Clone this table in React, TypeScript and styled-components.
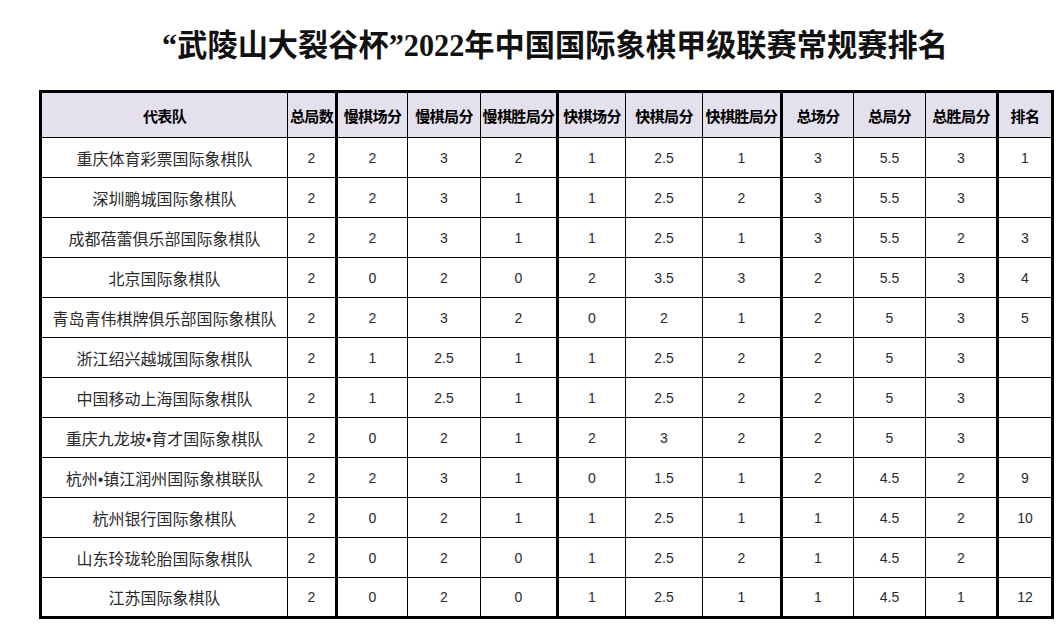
import styled, { createGlobalStyle } from 'styled-components';

const GlobalStyle = createGlobalStyle`
  html, body {
    margin: 0;
    padding: 0;
    background: #fff;
  }
`;

type Row = (string | number)[];

const columns = [
  { label: '代表队', width: 247 },
  { label: '总局数', width: 49 },
  { label: '慢棋场分', width: 71, thick: true },
  { label: '慢棋局分', width: 73 },
  { label: '慢棋胜局分', width: 77 },
  { label: '快棋场分', width: 68, thick: true },
  { label: '快棋局分', width: 77 },
  { label: '快棋胜局分', width: 79 },
  { label: '总场分', width: 72, thick: true },
  { label: '总局分', width: 72 },
  { label: '总胜局分', width: 72 },
  { label: '排名', width: 55, thick: true },
];

const rows: Row[] = [
  ['重庆体育彩票国际象棋队', 2, 2, 3, 2, 1, 2.5, 1, 3, 5.5, 3, 1],
  ['深圳鹏城国际象棋队', 2, 2, 3, 1, 1, 2.5, 2, 3, 5.5, 3, ''],
  ['成都蓓蕾俱乐部国际象棋队', 2, 2, 3, 1, 1, 2.5, 1, 3, 5.5, 2, 3],
  ['北京国际象棋队', 2, 0, 2, 0, 2, 3.5, 3, 2, 5.5, 3, 4],
  ['青岛青伟棋牌俱乐部国际象棋队', 2, 2, 3, 2, 0, 2, 1, 2, 5, 3, 5],
  ['浙江绍兴越城国际象棋队', 2, 1, 2.5, 1, 1, 2.5, 2, 2, 5, 3, ''],
  ['中国移动上海国际象棋队', 2, 1, 2.5, 1, 1, 2.5, 2, 2, 5, 3, ''],
  ['重庆九龙坡•育才国际象棋队', 2, 0, 2, 1, 2, 3, 2, 2, 5, 3, ''],
  ['杭州•镇江润州国际象棋联队', 2, 2, 3, 1, 0, 1.5, 1, 2, 4.5, 2, 9],
  ['杭州银行国际象棋队', 2, 0, 2, 1, 1, 2.5, 1, 1, 4.5, 2, 10],
  ['山东玲珑轮胎国际象棋队', 2, 0, 2, 0, 1, 2.5, 2, 1, 4.5, 2, ''],
  ['江苏国际象棋队', 2, 0, 2, 0, 1, 2.5, 1, 1, 4.5, 1, 12],
];

const App = () => {
  return (
    <Page>
      <GlobalStyle />
      <TitleBar>
        <Title>“武陵山大裂谷杯”2022年中国国际象棋甲级联赛常规赛排名</Title>
      </TitleBar>

      <Table>
        <colgroup>
          {columns.map((c) => (
            <col key={c.label} style={{ width: c.width }} />
          ))}
        </colgroup>
        <thead>
          <tr>
            {columns.map((c) => (
              <HeadCell key={c.label} $thick={c.thick}>
                {c.label}
              </HeadCell>
            ))}
          </tr>
        </thead>
        <tbody>
          {rows.map((row) => (
            <BodyRow key={row[0]}>
              {row.map((value, i) =>
                i === 0 ? (
                  <TeamCell key={i}>{value}</TeamCell>
                ) : (
                  <NumCell key={i} $thick={columns[i].thick}>
                    {value}
                  </NumCell>
                )
              )}
            </BodyRow>
          ))}
        </tbody>
      </Table>
    </Page>
  );
};

const Page = styled.div`
  width: 1058px;
  height: 626px;
  overflow: hidden;
  padding: 0 0 0 39px;
  box-sizing: border-box;
`;

const TitleBar = styled.div`
  width: 1016px;
  height: 90px;
  display: flex;
  justify-content: center;
  padding: 26px 0 0 16px;
  box-sizing: border-box;
`;

const Title = styled.h1`
  margin: 0;
  display: inline-block;
  font-family: 'Liberation Serif', 'Noto Sans CJK SC', serif;
  font-size: 31px;
  font-weight: 700;
  line-height: 40px;
  color: #111;
  white-space: nowrap;
  transform: scaleX(0.975);
  transform-origin: center;
`;

const Table = styled.table`
  border-collapse: collapse;
  table-layout: fixed;
  width: 1015px;
  border: 3px solid #000;
`;

const HeadCell = styled.th<{ $thick?: boolean }>`
  height: 44px;
  padding: 0;
  background: #e4e0ec;
  border: 1px solid #000;
  border-left: ${(p) => (p.$thick ? '3px' : '1px')} solid #000;
  border-bottom: 1px solid #000;
  font-family: 'Noto Sans CJK SC', sans-serif;
  font-size: 15px;
  font-weight: 700;
  color: #000;
  text-align: center;
  white-space: nowrap;
  letter-spacing: -0.6px;
`;

const BodyRow = styled.tr`
  height: 40px;
`;

const TeamCell = styled.td`
  padding: 0;
  border: 1px solid #000;
  font-family: 'Liberation Sans', 'Noto Sans CJK SC', sans-serif;
  font-size: 16px;
  font-weight: 400;
  color: #2a2a2a;
  text-align: center;
  white-space: nowrap;
`;

const NumCell = styled.td<{ $thick?: boolean }>`
  padding: 0;
  border: 1px solid #000;
  border-left: ${(p) => (p.$thick ? '3px' : '1px')} solid #000;
  font-family: 'Liberation Sans', sans-serif;
  font-size: 14px;
  color: #2a2a2a;
  text-align: center;
`;

export default App;
